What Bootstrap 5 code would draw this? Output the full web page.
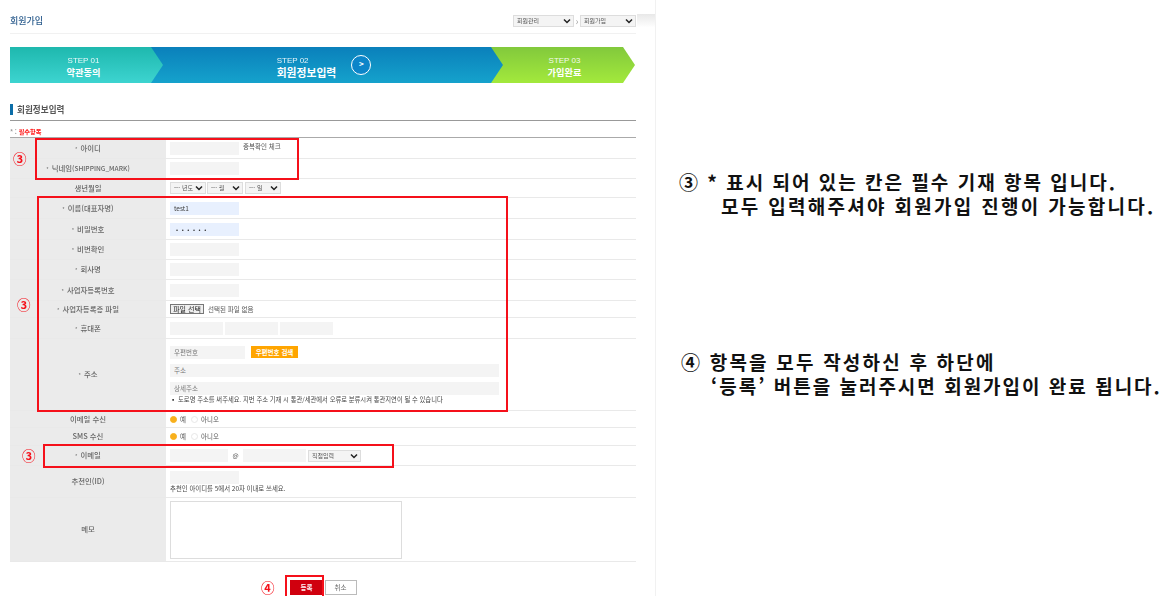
<!DOCTYPE html>
<html lang="ko">
<head>
<meta charset="utf-8">
<title>회원가입</title>
<link rel="stylesheet" href="https://cdn.jsdelivr.net/npm/bootstrap@5.3.0/dist/css/bootstrap.min.css">
<style>
html,body{margin:0;height:602px;overflow:hidden;background:#fff}
body{font-family:"Noto Sans CJK KR","Liberation Sans",sans-serif;color:#555}
.stage{width:1166px;height:602px}
.sheet{width:656px;height:596px;flex:none;overflow:hidden;padding:0 19px 0 10px;border-right:1px solid #f1f1f1;position:relative}
.sheet-fade{position:absolute;left:637px;top:14px;width:18px;height:16px;background:linear-gradient(#e8e8e8,#fff 85%)}
.soft{filter:blur(.4px)}
.head-row{height:34px;border-bottom:1px solid #f1f1f1;padding-top:15px}
.page-name{font-size:9px;line-height:11px;color:#2f5f8f;font-weight:500}
.tiny-select.form-select{font-size:6px;line-height:1;height:12px;min-height:0;padding:0 0 0 3px;border:1px solid #ddd;border-radius:0;background-color:#f4f4f4;background-position:right 2px center;background-size:8px 8px;color:#555;--bs-form-select-bg-img:url("data:image/svg+xml,%3csvg xmlns='http://www.w3.org/2000/svg' viewBox='0 0 16 16'%3e%3cpath fill='none' stroke='%23222' stroke-width='3' d='m2 5 6 6 6-6'/%3e%3c/svg%3e")}
.sw-61{width:61px}.sw-56{width:56px}.sw-36{width:36px}.sw-53{width:53px}
.crumb{font-size:10px;color:#aaa;width:6px;text-align:center;line-height:11px}
.steps{height:36px;margin-top:13px;width:625px}
.stepper{height:36px;color:#fff;text-align:center;padding-top:3px}
.stepper small{display:block;font-family:"Liberation Sans",sans-serif;font-size:8px;line-height:9px;opacity:.9;margin-bottom:2px}
.stepper b{display:block;font-size:9.2px;line-height:11px;font-weight:700}
.stepper-a{width:153px;z-index:3;padding-right:6px;background:linear-gradient(#1eb8ae,#3dd4d0);clip-path:polygon(0 0,141px 0,153px 50%,141px 100%,0 100%)}
.stepper-b{width:352px;margin-left:-12px;z-index:2;padding-right:6px;background:linear-gradient(#0a80bb,#15a2cc);clip-path:polygon(0 0,340px 0,352px 50%,340px 100%,0 100%)}
.stepper-b b{font-size:10.8px}
.stepper-c{width:144px;margin-left:-12px;z-index:1;padding-left:3px;background:linear-gradient(#82c93c,#a3e93c);clip-path:polygon(0 0,132px 0,144px 50%,132px 100%,0 100%)}
.step-ring{width:20px;height:20px;border:1.5px solid #fff;border-radius:50%;background:#0c85c9;font-size:8px;font-weight:700;line-height:16px;margin-left:15px;margin-top:-3px}
.sect-title{margin-top:21px;height:16px;font-size:8.6px;font-weight:700;color:#555;line-height:11px;padding-left:7px;position:relative}
.sect-title::before{content:"";position:absolute;left:0;top:0;width:2.5px;height:11px;background:#0c6ea8}
.sect-line{border-top:1px solid #999;height:17px;font-size:6.2px;line-height:7px;color:#f11;font-weight:700;padding-top:7px}
.sect-line span{color:#999}
.jtable.table{width:626px;table-layout:fixed;margin:0;border-top:1px solid #aaa;--bs-table-color:#555;--bs-table-bg:transparent}
.jtable.table>tbody>tr>*{padding:0;border-bottom:1px solid #e9e9e9;vertical-align:middle;font-size:6.5px;line-height:1;box-shadow:none}
.jtable.table>tbody>tr>th{width:156px;background:#ebebeb;text-align:center;font-weight:500;color:#666;font-size:7.4px;padding-bottom:1px}
.jtable.table>tbody>tr>td{padding-left:4px}
.jtable th i{font-style:normal;font-size:5px;margin-right:3px}
.jtable th em{font-style:normal;font-size:6.6px}
.dup-note{margin-left:4px;margin-bottom:3px}
.fld.form-control{display:block;height:13px;min-height:0;padding:0 4px;font-size:6.5px;line-height:1;border:0;border-radius:0;background:#f4f4f4;color:#444}
.fld.form-control::placeholder{color:#777;opacity:1}
.fld.filled.form-control{background:#e8f0fe}
.fld.pw.form-control{letter-spacing:3.6px;color:#222;font-size:6px;padding-left:6px}
.fw-69{width:69px}.fw-75{width:75px}.fw-329{width:329px}.fw-53{width:53px}.fw-58{width:58px}.fw-63{width:63px}
.file-btn.btn{font-size:7px;line-height:1;height:10px;width:34px;padding:0;border:1px solid #777;border-radius:0;background:#efefef;color:#222}
.zip-btn.btn{font-size:6.5px;font-weight:700;line-height:12px;height:12px;width:47px;padding:0;border:0;border-radius:0;background:#ffa500;color:#fff}
.dot{display:inline-block;width:7px;height:7px;border-radius:50%;border:1px solid #e6e6e6;background:#fff}
.dot.on{background:#f8b01c;border-color:#f8b01c}
.memo.form-control{width:232px;height:58px;border:1px solid #ddd;border-radius:0;padding:0;resize:none;background:#fff}
.addr-note{font-size:6.3px;margin-top:2px;color:#444;white-space:nowrap}
.ref-note{margin-top:2px;font-size:6.4px;color:#444}
.act-row{margin-top:18px}
.act-save.btn,.act-cancel.btn{height:15px;font-size:6.5px;line-height:1;padding:0;border-radius:0}
.act-save.btn{width:34px;background:#d0000e;border:0;color:#fff;font-weight:700}
.act-cancel.btn{width:32px;background:#fff;border:1px solid #bbb;color:#666;margin-left:1px}
.callout{position:absolute;border:2px solid #f5101a;pointer-events:none}
.callout-a{left:35px;top:138px;width:264px;height:42px}
.callout-b{left:37px;top:196px;width:471px;height:216px}
.callout-c{left:43px;top:444px;width:351px;height:24px}
.callout-d{left:285px;top:575px;width:39px;height:30px}
.mk{position:absolute;color:#f5101a;font-size:13.5px;font-weight:700;line-height:1}
.mk-a{left:13px;top:152px}.mk-b{left:17px;top:298px}.mk-c{left:22px;top:449px}.mk-d{left:261px;top:581px}
.notes{padding-left:23px;padding-top:170px;font-size:19px;font-weight:700;color:#111;line-height:24px;white-space:nowrap}
.nl-1{letter-spacing:2px}
.nl-2{letter-spacing:2.3px;padding-left:42px}
.nl-3{letter-spacing:2.2px;margin-top:132px;margin-left:2px}
.nl-4{letter-spacing:2px;padding-left:30px;margin-left:2px}
</style>
</head>
<body>
<div class="stage d-flex">
  <div class="sheet">
    <div class="sheet-fade"></div>
    <div class="soft">
      <div class="head-row d-flex justify-content-between align-items-start">
        <div class="page-name">회원가입</div>
        <div class="d-flex">
          <select class="form-select tiny-select sw-61"><option>회원관리</option></select>
          <span class="crumb">›</span>
          <select class="form-select tiny-select sw-56"><option>회원가입</option></select>
        </div>
      </div>
      <div class="steps d-flex">
        <div class="stepper stepper-a d-flex align-items-center justify-content-center"><div><small>STEP 01</small><b>약관동의</b></div></div>
        <div class="stepper stepper-b d-flex align-items-center justify-content-center"><div class="text-start"><small>STEP 02</small><b>회원정보입력</b></div><div class="step-ring">&gt;</div></div>
        <div class="stepper stepper-c d-flex align-items-center justify-content-center"><div><small>STEP 03</small><b>가입완료</b></div></div>
      </div>
      <div class="sect-title">회원정보입력</div>
      <div class="sect-line"><span>* : </span>필수항목</div>
      <table class="table jtable">
        <tbody>
          <tr style="height:21px"><th><i>*</i>아이디</th><td><div class="d-flex align-items-center"><input class="form-control fld fw-69"><span class="dup-note">중복확인 체크</span></div></td></tr>
          <tr style="height:20px"><th><i>*</i>닉네임<em>(SHIPPING_MARK)</em></th><td><input class="form-control fld fw-69"></td></tr>
          <tr style="height:19px"><th>생년월일</th><td><div class="d-flex"><select class="form-select tiny-select sw-36"><option>--- 년도</option></select><select class="form-select tiny-select sw-36" style="margin-left:1px"><option>--- 월</option></select><select class="form-select tiny-select sw-36" style="margin-left:2px"><option>--- 일</option></select></div></td></tr>
          <tr style="height:21px"><th><i>*</i>이름(대표자명)</th><td><input class="form-control fld filled fw-69" value="test1"></td></tr>
          <tr style="height:21px"><th><i>*</i>비밀번호</th><td><input class="form-control fld filled pw fw-69" type="password" value="123456"></td></tr>
          <tr style="height:20px"><th><i>*</i>비번확인</th><td><input class="form-control fld fw-69"></td></tr>
          <tr style="height:20px"><th><i>*</i>회사명</th><td><input class="form-control fld fw-69"></td></tr>
          <tr style="height:21px"><th><i>*</i>사업자등록번호</th><td><input class="form-control fld fw-69"></td></tr>
          <tr style="height:17px"><th><i>*</i>사업자등록증 파일</th><td><div class="d-flex align-items-center"><button type="button" class="btn file-btn">파일 선택</button><span class="ms-1">선택된 파일 없음</span></div></td></tr>
          <tr style="height:21px"><th><i>*</i>휴대폰</th><td><div class="d-flex" style="gap:2px"><input class="form-control fld fw-53"><input class="form-control fld fw-53"><input class="form-control fld fw-53"></div></td></tr>
          <tr style="height:72px"><th><i>*</i>주소</th><td>
            <div class="d-flex flex-column" style="gap:5px">
              <div class="d-flex align-items-center" style="gap:6px"><input class="form-control fld fw-75" placeholder="우편번호"><button type="button" class="btn zip-btn">우편번호 검색</button></div>
              <input class="form-control fld fw-329" placeholder="주소">
              <input class="form-control fld fw-329" placeholder="상세주소">
            </div>
            <div class="addr-note">▪ 도로명 주소를 써주세요. 지번 주소 기재 시 통관/세관에서 오류로 분류시켜 통관지연이 될 수 있습니다</div>
          </td></tr>
          <tr style="height:17px"><th>이메일 수신</th><td><div class="d-flex align-items-center"><span class="dot on"></span><span style="margin-left:3px">예</span><span class="dot" style="margin-left:5px"></span><span style="margin-left:3px">아니오</span></div></td></tr>
          <tr style="height:18px"><th>SMS 수신</th><td><div class="d-flex align-items-center"><span class="dot on"></span><span style="margin-left:3px">예</span><span class="dot" style="margin-left:5px"></span><span style="margin-left:3px">아니오</span></div></td></tr>
          <tr style="height:20px"><th><i>*</i>이메일</th><td><div class="d-flex align-items-center"><input class="form-control fld fw-58"><span style="width:15px;text-align:center">@</span><input class="form-control fld fw-63"><select class="form-select tiny-select sw-53" style="margin-left:2px"><option>직접입력</option></select></div></td></tr>
          <tr style="height:32px"><th>추천인(ID)</th><td><input class="form-control fld fw-69"><div class="ref-note">추천인 아이디를 5에서 20자 이내로 쓰세요.</div></td></tr>
          <tr style="height:64px"><th>메모</th><td><textarea class="form-control memo"></textarea></td></tr>
        </tbody>
      </table>
      <div class="act-row d-flex justify-content-center">
        <button type="button" class="btn act-save">등록</button>
        <button type="button" class="btn act-cancel">취소</button>
      </div>
    </div>
    <div class="callout callout-a"></div>
    <div class="callout callout-b"></div>
    <div class="callout callout-c"></div>
    <div class="callout callout-d"></div>
    <span class="mk mk-a">③</span>
    <span class="mk mk-b">③</span>
    <span class="mk mk-c">③</span>
    <span class="mk mk-d">④</span>
  </div>
  <div class="notes">
    <div class="nl-1">③ * 표시 되어 있는 칸은 필수 기재 항목 입니다.</div>
    <div class="nl-2">모두 입력해주셔야 회원가입 진행이 가능합니다.</div>
    <div class="nl-3">④ 항목을 모두 작성하신 후 하단에</div>
    <div class="nl-4">‘등록’ 버튼을 눌러주시면 회원가입이 완료 됩니다.</div>
  </div>
</div>
</body>
</html>
